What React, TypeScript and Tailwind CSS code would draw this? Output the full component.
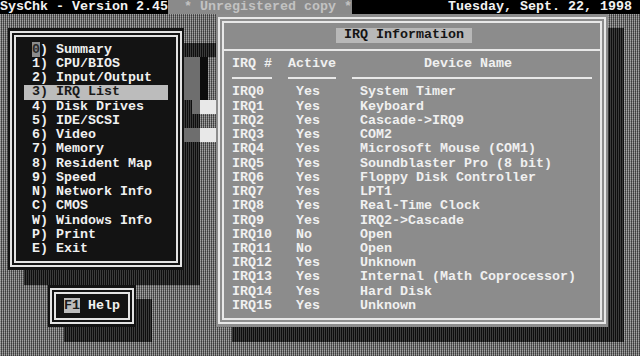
import React from 'react'

const bgMain =
  'bg-[#707070] bg-[repeating-linear-gradient(0deg,rgba(0,0,0,0.14)_0px_1px,rgba(255,255,255,0.06)_1px_2px),repeating-linear-gradient(90deg,#9e9e9e_0px_1px,#474747_1px_2px)]'
const bgShadow =
  'bg-[#151515] bg-[repeating-linear-gradient(90deg,#3c3c3c_0px_1px,#0e0e0e_1px_2px)]'

const menu = [
  ['0', 'Summary'],
  ['1', 'CPU/BIOS'],
  ['2', 'Input/Output'],
  ['3', 'IRQ List'],
  ['4', 'Disk Drives'],
  ['5', 'IDE/SCSI'],
  ['6', 'Video'],
  ['7', 'Memory'],
  ['8', 'Resident Map'],
  ['9', 'Speed'],
  ['N', 'Network Info'],
  ['C', 'CMOS'],
  ['W', 'Windows Info'],
  ['P', 'Print'],
  ['E', 'Exit'],
]

const irqs = [
  ['IRQ0', 'Yes', 'System Timer'],
  ['IRQ1', 'Yes', 'Keyboard'],
  ['IRQ2', 'Yes', 'Cascade->IRQ9'],
  ['IRQ3', 'Yes', 'COM2'],
  ['IRQ4', 'Yes', 'Microsoft Mouse (COM1)'],
  ['IRQ5', 'Yes', 'Soundblaster Pro (8 bit)'],
  ['IRQ6', 'Yes', 'Floppy Disk Controller'],
  ['IRQ7', 'Yes', 'LPT1'],
  ['IRQ8', 'Yes', 'Real-Time Clock'],
  ['IRQ9', 'Yes', 'IRQ2->Cascade'],
  ['IRQ10', 'No', 'Open'],
  ['IRQ11', 'No', 'Open'],
  ['IRQ12', 'Yes', 'Unknown'],
  ['IRQ13', 'Yes', 'Internal (Math Coprocessor)'],
  ['IRQ14', 'Yes', 'Hard Disk'],
  ['IRQ15', 'Yes', 'Unknown'],
]

function App() {
  return (
    <div
      className={`w-[640px] h-[356px] overflow-hidden grid grid-cols-[repeat(80,8px)] grid-rows-[repeat(25,14.24px)] font-['Liberation_Mono',monospace] text-[13.33px] leading-[14.24px] font-bold whitespace-pre ${bgMain}`}
    >
      {/* top bar */}
      <div className="col-start-1 col-span-21 row-start-1 bg-black text-[#f2f2f2]">SysChk - Version 2.45</div>
      <div className="col-start-22 col-span-23 row-start-1 bg-[#8a8a8a] text-[#c2c2c2] pl-[16px]">
        * Unregistered copy *
      </div>
      <div className="col-start-45 col-span-36 row-start-1 bg-black text-[#f2f2f2] text-right pr-[8px]">
        Tuesday, Sept. 22, 1998
      </div>

      {/* leftovers between menu and irq window */}
      <div className={`col-start-26 col-span-2 row-start-4 ${bgShadow}`} />
      <div className="col-start-26 row-start-5 row-span-3 bg-[#0c0c0c]" />
      <div className="col-start-26 col-span-2 row-start-8 bg-[#e8e8e8]" />
      <div className="col-start-26 col-span-2 row-start-10 bg-[#e8e8e8]" />

      {/* menu */}
      <div className={`col-start-4 col-span-22 row-start-4 row-span-17 ${bgShadow}`} />
      <div className="col-start-24 col-span-2 row-start-5 row-span-3 bg-[#6e6e6e]" />
      <div className="col-start-25 row-start-8 bg-[#6e6e6e]" />
      <div className="col-start-24 col-span-2 row-start-10 bg-[#6e6e6e]" />
      <div className="col-start-2 col-span-22 row-start-3 row-span-17 bg-[#131313] px-[2px] py-[3px]">
        <div className="h-full border-[6px] border-double border-[#e4e4e4] py-[5.24px]">
          {menu.map(([k, label]) => {
            const sel = k === '3'
            return (
              <div
                key={k}
                className={`ml-[8px] w-[144px] pl-[8px] h-[14.24px] ${
                  sel ? 'bg-[#bcbcbc] text-[#1a1a1a]' : 'text-[#f0f0f0]'
                }`}
              >
                {k === '0' ? <span className="bg-[#8c8c8c] text-[#2a2a2a]">0</span> : k}
                {') ' + label}
              </div>
            )
          })}
        </div>
      </div>

      {/* help button */}
      <div className={`col-start-9 col-span-11 row-start-22 row-span-3 ${bgShadow}`} />
      <div className="col-start-7 col-span-11 row-start-21 row-span-3 bg-[#131313] px-[2px] py-[3px]">
        <div className="h-full border-[6px] border-double border-[#e4e4e4] py-[5.24px] pl-[8px] text-[#f0f0f0]">
          <span className="bg-[#bcbcbc] text-[#1a1a1a]">F1</span> Help
        </div>
      </div>

      {/* irq window */}
      <div className={`col-start-30 col-span-49 row-start-3 row-span-22 ${bgShadow}`} />
      <div className="col-start-28 col-span-49 row-start-2 row-span-22 bg-[#8c8c8c] px-[2px] py-[3px]">
        <div className="h-full border-[6px] border-double border-[#e8e8e8] py-[5.24px] text-[#f0f0f0]">
          <div className="h-[14.24px]">
            <span className="ml-[112px] inline-block w-[136px] pl-[8px] bg-[#b8b8b8] text-[#151515]">
              IRQ Information
            </span>
          </div>
          <div className="h-[14.24px] flex items-center">
            <div className="h-[2px] w-full bg-[#e8e8e8]" />
          </div>
          <div className="h-[14.24px] flex">
            <span className="w-[64px] pl-[8px]">IRQ #</span>
            <span className="w-[136px]">Active</span>
            <span>Device Name</span>
          </div>
          <div className="h-[14.24px] flex items-center">
            <div className="ml-[8px] w-[40px] h-[2px] bg-[#e8e8e8]" />
            <div className="ml-[16px] w-[48px] h-[2px] bg-[#e8e8e8]" />
            <div className="ml-[16px] w-[240px] h-[2px] bg-[#e8e8e8]" />
          </div>
          {irqs.map(([irq, act, dev]) => (
            <div key={irq} className="h-[14.24px] flex">
              <span className="w-[72px] pl-[8px]">{irq}</span>
              <span className="w-[64px]">{act}</span>
              <span>{dev}</span>
            </div>
          ))}
        </div>
      </div>
    </div>
  )
}

export default App
